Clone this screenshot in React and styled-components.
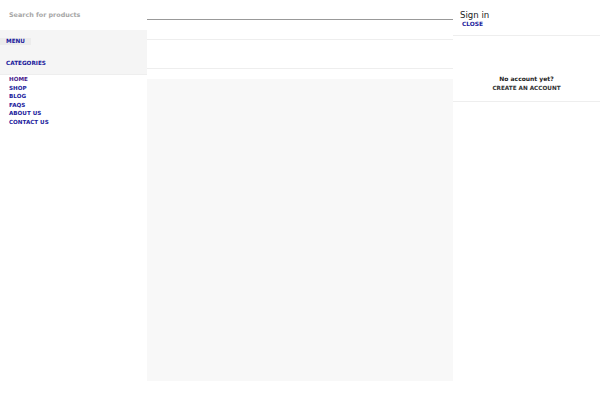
import React from 'react';
import styled, { createGlobalStyle } from 'styled-components';

const Global = createGlobalStyle`
  html, body { margin: 0; padding: 0; background: #fff; }
  body { font-family: "DejaVu Sans", sans-serif; overflow: hidden; }
  a { text-decoration: none; }
`;

const Page = styled.div`
  display: grid;
  grid-template-columns: 147px 306px 147px;
  width: 600px;
  height: 400px;
`;

const Sidebar = styled.aside`
  display: flex;
  flex-direction: column;
`;

const SearchBox = styled.div`
  height: 30px;
  padding: 10px 0 0 9px;
  box-sizing: border-box;
  font-size: 6.4px;
  line-height: 10px;
  font-weight: 700;
  color: #a6a6a6;
`;

const Tabs = styled.div`
  height: 45px;
  box-sizing: border-box;
  background: #f5f5f5;
  padding-top: 8px;
  border-bottom: 1px solid #eee;
`;

const TabLink = styled.a`
  display: block;
  width: ${({ $active }) => ($active ? '25px' : 'auto')};
  height: 7px;
  padding-left: 6px;
  margin-bottom: 15px;
  background: ${({ $active }) => ($active ? '#ececec' : 'transparent')};
  font-size: 5.7px;
  line-height: 7px;
  font-weight: 700;
  color: #1a1a9c;
`;

const NavList = styled.nav`
  display: flex;
  flex-direction: column;
  padding: 0 0 0 9px;
`;

const NavLink = styled.a`
  font-size: 5.6px;
  line-height: 8.6px;
  font-weight: 700;
  color: ${({ $current }) => ($current ? '#4b1a8c' : '#1a1a9c')};
`;

const Main = styled.main`
  display: flex;
  flex-direction: column;
`;

const SearchLine = styled.div`
  height: 20px;
  box-sizing: border-box;
  border-bottom: 1px solid #999;
`;

const Band = styled.div`
  height: ${({ $h }) => $h}px;
  box-sizing: border-box;
  border-bottom: 1px solid #eee;
`;

const Content = styled.div`
  height: 302px;
  margin-top: 10px;
  background: #f8f8f8;
`;

const Account = styled.aside`
  display: flex;
  flex-direction: column;
`;

const AccountHead = styled.div`
  height: 36px;
  box-sizing: border-box;
  padding: 9px 0 0 7px;
  border-bottom: 1px solid #eee;
`;

const Title = styled.div`
  font-size: 8.6px;
  line-height: 12px;
  color: #222;
`;

const CloseLink = styled.a`
  display: block;
  margin: -1px 0 0 2px;
  font-size: 5.9px;
  line-height: 8px;
  font-weight: 700;
  color: #1a1a9c;
`;

const Register = styled.div`
  height: 66px;
  box-sizing: border-box;
  padding-top: 38px;
  border-bottom: 1px solid #eee;
  text-align: center;
`;

const Question = styled.div`
  font-size: 6px;
  line-height: 9px;
  font-weight: 700;
  color: #222;
`;

const CreateLink = styled.a`
  display: block;
  margin-top: 1px;
  font-size: 5.7px;
  line-height: 9px;
  font-weight: 700;
  color: #333;
`;

const links = ['SHOP', 'BLOG', 'FAQS', 'ABOUT US', 'CONTACT US'];

export default function App() {
  return (
    <>
      <Global />
      <Page>
        <Sidebar>
          <SearchBox>Search for products</SearchBox>
          <Tabs>
            <TabLink $active href="#">MENU</TabLink>
            <TabLink href="#">CATEGORIES</TabLink>
          </Tabs>
          <NavList>
            <NavLink $current href="#">HOME</NavLink>
            {links.map(l => <NavLink key={l} href="#">{l}</NavLink>)}
          </NavList>
        </Sidebar>
        <Main>
          <SearchLine />
          <Band $h={20} />
          <Band $h={29} />
          <Content />
        </Main>
        <Account>
          <AccountHead>
            <Title>Sign in</Title>
            <CloseLink href="#">CLOSE</CloseLink>
          </AccountHead>
          <Register>
            <Question>No account yet?</Question>
            <CreateLink href="#">CREATE AN ACCOUNT</CreateLink>
          </Register>
        </Account>
      </Page>
    </>
  );
}
